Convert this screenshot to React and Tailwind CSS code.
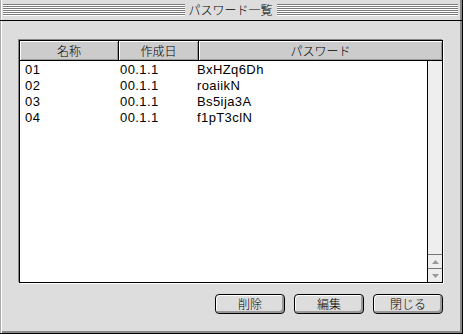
export default function App() {
  const rows = [
    ["01", "00.1.1", "BxHZq6Dh"],
    ["02", "00.1.1", "roaiikN"],
    ["03", "00.1.1", "Bs5ija3A"],
    ["04", "00.1.1", "f1pT3clN"],
  ];
  const stripe =
    "flex-1 h-[12px] bg-[repeating-linear-gradient(to_bottom,#7a7a7a_0px,#7a7a7a_1px,#ffffff_1px,#ffffff_2px)]";
  const headCell =
    "h-full flex items-center justify-center bg-[#cccccc] shadow-[inset_1px_1px_0_#ffffff,inset_-1px_-1px_0_#999999] text-[12px] leading-none";
  const btn =
    "w-[70px] h-[20px] flex items-center justify-center rounded-[4px] border border-black bg-[#dddddd] shadow-[inset_1px_1px_0_#ffffff,inset_-2px_-2px_0_#999999] text-[12px] leading-none";
  return (
    <div className="w-[463px] h-[334px] bg-[#dddddd] flex flex-col border-r border-b border-black shadow-[inset_1px_0_0_#aaaaaa,inset_2px_0_0_#ffffff,inset_-2px_-2px_0_#888888] font-['Noto_Sans_CJK_JP',sans-serif] font-light text-black">
      <div className="h-[21px] shrink-0 flex items-start pt-[4px] pl-[3px] pr-[4px] border-b border-black">
        <div className={stripe} />
        <div className="px-[4px] text-[12px] leading-[12px] whitespace-nowrap">パスワード一覧</div>
        <div className={stripe} />
      </div>
      <div className="flex-1 flex flex-col pl-[19px] pt-[19px]">
        <div className="w-[424px] h-[243px] border border-black bg-white flex flex-col shadow-[-1px_-1px_0_#888888,1px_1px_0_#ffffff]">
          <div className="h-[20px] shrink-0 flex border-b border-black">
            <div className={`${headCell} w-[99px] border-r border-black`}>名称</div>
            <div className={`${headCell} w-[80px] border-r border-black`}>作成日</div>
            <div className={`${headCell} flex-1`}>パスワード</div>
          </div>
          <div className="flex-1 flex">
            <div className="flex-1 flex flex-col font-['Liberation_Sans',sans-serif] font-normal text-[13px] tracking-[0.4px]">
              {rows.map((r) => (
                <div key={r[0]} className="h-[16px] flex items-center pl-[5px] leading-none">
                  <div className="w-[95px]">{r[0]}</div>
                  <div className="w-[77px]">{r[1]}</div>
                  <div>{r[2]}</div>
                </div>
              ))}
            </div>
            <div className="w-[15px] border-l border-black bg-[#eeeeee] flex flex-col">
              <div className="flex-1" />
              <div className="h-[14px] border-t border-[#777777] flex items-center justify-center">
                <svg width="7" height="4" viewBox="0 0 7 4"><polygon points="3.5,0 7,4 0,4" fill="#999999" /></svg>
              </div>
              <div className="h-[14px] border-t border-[#777777] flex items-center justify-center">
                <svg width="7" height="4" viewBox="0 0 7 4"><polygon points="0,0 7,0 3.5,4" fill="#999999" /></svg>
              </div>
            </div>
          </div>
        </div>
        <div className="w-[424px] mt-[11px] flex justify-end gap-[9px]">
          <div className={btn}>削除</div>
          <div className={btn}>編集</div>
          <div className={btn}>閉じる</div>
        </div>
      </div>
    </div>
  );
}
